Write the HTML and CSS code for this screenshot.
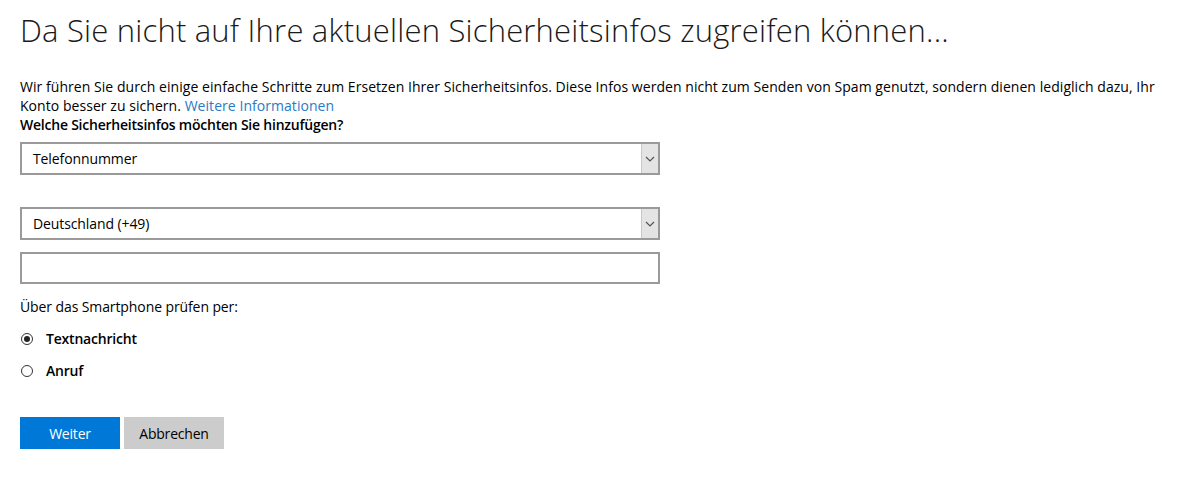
FILE: index.html
```html
<!DOCTYPE html>
<html lang="de">
<head>
<meta charset="utf-8">
<title>Sicherheitsinfos</title>
<link rel="stylesheet" href="styles.css">
</head>
<body>
<main class="page">
  <h1 class="title">Da Sie nicht auf Ihre aktuellen Sicherheitsinfos zugreifen können...</h1>
  <p class="intro">Wir führen Sie durch einige einfache Schritte zum Ersetzen Ihrer Sicherheitsinfos. Diese Infos werden nicht zum Senden von Spam genutzt, sondern dienen lediglich dazu, Ihr Konto besser zu sichern. <a href="#" class="link">Weitere Informationen</a></p>
  <div class="question">Welche Sicherheitsinfos möchten Sie hinzufügen?</div>

  <div class="select first">
    <span class="select-text">Telefonnummer</span>
    <span class="arrow"><svg width="10" height="6" viewBox="0 0 10 6"><path d="M1 1 L5 5 L9 1" fill="none" stroke="#555" stroke-width="1.2"/></svg></span>
  </div>

  <div class="select second">
    <span class="select-text">Deutschland (+49)</span>
    <span class="arrow"><svg width="10" height="6" viewBox="0 0 10 6"><path d="M1 1 L5 5 L9 1" fill="none" stroke="#555" stroke-width="1.2"/></svg></span>
  </div>

  <div class="input"></div>

  <div class="verify">Über das Smartphone prüfen per:</div>

  <div class="radios">
    <label class="radio"><span class="dot checked"></span><span class="radio-label">Textnachricht</span></label>
    <label class="radio"><span class="dot"></span><span class="radio-label">Anruf</span></label>
  </div>

  <div class="buttons">
    <button class="btn primary">Weiter</button>
    <button class="btn secondary">Abbrechen</button>
  </div>
</main>
</body>
</html>
```

FILE: styles.css
```css
html, body {
  margin: 0;
  padding: 0;
  background: #fff;
}

body {
  font-family: "Segoe UI", "Open Sans", "Noto Sans", sans-serif;
  color: #000;
}

.page {
  padding: 10px 20px 0 20px;
  width: 1138px;
}

.title {
  margin: 0;
  font-size: 31px;
  font-weight: 300;
  line-height: 40px;
  color: #1a1a1a;
  letter-spacing: 0.2px;
}

.intro {
  margin: 27px 0 0 0;
  font-size: 14px;
  line-height: 19px;
  letter-spacing: 0.05px;
  width: 1152px;
}

.link {
  color: #2a7ac5;
  text-decoration: none;
}

.question {
  font-size: 14px;
  font-weight: 600;
  line-height: 19px;
  letter-spacing: -0.23px;
}

.select {
  display: flex;
  align-items: stretch;
  justify-content: space-between;
  width: 640px;
  height: 33px;
  box-sizing: border-box;
  border: 2px solid #9a9a9a;
  background: #fff;
}

.select.first {
  margin-top: 8px;
}

.select.second {
  margin-top: 32px;
}

.select-text {
  display: flex;
  align-items: center;
  padding-left: 11px;
  font-size: 14px;
  letter-spacing: -0.1px;
}

.arrow {
  width: 16px;
  display: flex;
  align-items: center;
  justify-content: center;
  background: #e4e4e4;
  border-left: 1px solid #c8c8c8;
}

.input {
  margin-top: 12px;
  width: 640px;
  height: 32px;
  box-sizing: border-box;
  border: 2px solid #9a9a9a;
}

.verify {
  margin-top: 13px;
  font-size: 14px;
  line-height: 19px;
  letter-spacing: -0.1px;
}

.radios {
  margin-top: 13px;
  display: flex;
  flex-direction: column;
  gap: 13px;
}

.radio {
  display: flex;
  align-items: center;
  height: 19px;
}

.dot {
  width: 12px;
  height: 12px;
  box-sizing: border-box;
  border: 1px solid #333;
  border-radius: 50%;
  margin-left: 1px;
  position: relative;
}

.dot.checked::after {
  content: "";
  position: absolute;
  left: 2px;
  top: 2px;
  width: 6px;
  height: 6px;
  border-radius: 50%;
  background: #222;
}

.radio-label {
  margin-left: 13px;
  font-size: 14px;
  font-weight: 600;
  letter-spacing: -0.2px;
}

.buttons {
  margin-top: 37px;
  display: flex;
  gap: 4px;
}

.btn {
  width: 100px;
  height: 32px;
  border: none;
  font-family: inherit;
  font-size: 14px;
  letter-spacing: -0.2px;
  padding: 0;
}

.btn.primary {
  background: #0078d7;
  color: #fff;
}

.btn.secondary {
  background: #cccccc;
  color: #000;
}
```
